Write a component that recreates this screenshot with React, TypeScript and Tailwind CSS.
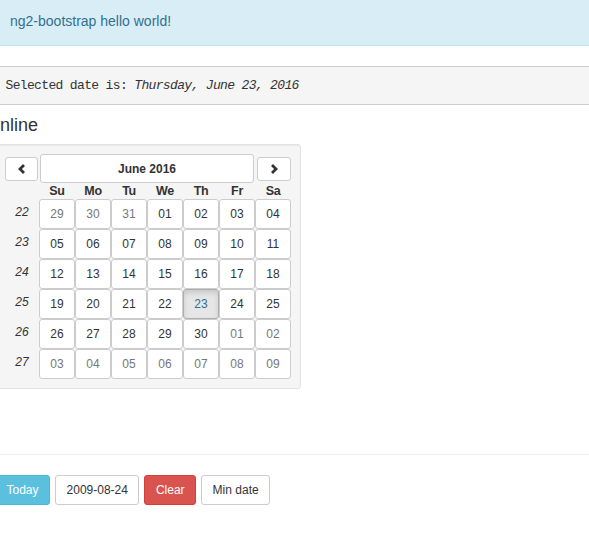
import React from 'react';

type Day = { label: string; muted?: boolean; active?: boolean };

const weeks: { num: number; days: Day[] }[] = [
  { num: 22, days: [{ label: '29', muted: true }, { label: '30', muted: true }, { label: '31', muted: true }, { label: '01' }, { label: '02' }, { label: '03' }, { label: '04' }] },
  { num: 23, days: ['05', '06', '07', '08', '09', '10', '11'].map((label) => ({ label })) },
  { num: 24, days: ['12', '13', '14', '15', '16', '17', '18'].map((label) => ({ label })) },
  { num: 25, days: [{ label: '19' }, { label: '20' }, { label: '21' }, { label: '22' }, { label: '23', active: true }, { label: '24' }, { label: '25' }] },
  { num: 26, days: [{ label: '26' }, { label: '27' }, { label: '28' }, { label: '29' }, { label: '30' }, { label: '01', muted: true }, { label: '02', muted: true }] },
  { num: 27, days: ['03', '04', '05', '06', '07', '08', '09'].map((label) => ({ label, muted: true })) },
];

const dayNames = ['Su', 'Mo', 'Tu', 'We', 'Th', 'Fr', 'Sa'];

const Chevron: React.FC<{ dir: 'left' | 'right' }> = ({ dir }) => (
  <svg width="12" height="12" viewBox="0 0 12 12" className="block">
    <polyline
      points={dir === 'left' ? '8,2 4,6 8,10' : '4,2 8,6 4,10'}
      fill="none"
      stroke="#333"
      strokeWidth="2.8"
      strokeLinejoin="miter"
    />
  </svg>
);

const DayPicker: React.FC = () => (
  <table className="border-collapse">
    <thead>
      <tr>
        <th className="p-0 w-[34px] align-middle">
          <button className="flex items-center justify-center w-[33px] h-[24px] bg-white border border-[#ccc] rounded-[3px]">
            <Chevron dir="left" />
          </button>
        </th>
        <th colSpan={6} className="p-0 px-[1px] align-middle">
          <button className="w-full h-[29px] bg-white border border-[#ccc] rounded-[3px] text-[12px] leading-[18px] font-bold text-[#333]">
            June 2016
          </button>
        </th>
        <th className="p-0 align-middle">
          <button className="ml-auto mr-0 flex items-center justify-center w-[34px] h-[24px] bg-white border border-[#ccc] rounded-[3px]">
            <Chevron dir="right" />
          </button>
        </th>
      </tr>
      <tr>
        <th className="p-0"></th>
        {dayNames.map((d) => (
          <th key={d} className="p-0 text-center text-[12.5px] leading-[16px] font-bold text-[#333] tracking-[-0.3px]">
            {d}
          </th>
        ))}
      </tr>
    </thead>
    <tbody>
      {weeks.map((w) => (
        <tr key={w.num}>
          <td className="p-0 w-[34px] text-center align-middle">
            <em className="block text-[12px] leading-[13px] text-[#333] -mt-[3px]">{w.num}</em>
          </td>
          {w.days.map((d, i) => (
            <td key={i} className="p-0">
              <button
                className={
                  d.active
                    ? 'block w-[36px] h-[30px] border border-[#adadad] rounded-[3px] bg-[#e6e6e6] shadow-[inset_0_3px_5px_rgba(0,0,0,0.125)] text-[12px] leading-[18px] text-[#31708f]'
                    : 'block w-[36px] h-[30px] border border-[#ccc] rounded-[3px] bg-white text-[12px] leading-[18px] ' +
                      (d.muted ? 'text-[#777]' : 'text-[#333]')
                }
              >
                {d.label}
              </button>
            </td>
          ))}
        </tr>
      ))}
    </tbody>
  </table>
);

const App: React.FC = () => {
  return (
    <div className="min-h-[550px] overflow-hidden bg-white font-['Liberation_Sans',Arial,sans-serif] text-[14px] leading-[20px] text-[#333]">
      <div className="-ml-[5px]">
        <div className="bg-[#d9edf7] border-b border-[#bce8f1] text-[#31708f] pt-[11px] pb-[14px] px-[15px] mb-[20px]">
          ng2-bootstrap hello world!
        </div>

        <pre className="bg-[#f5f5f5] border border-r-0 border-[#ccc] py-[9.5px] px-[9.5px] mb-[10px] font-['Liberation_Mono',monospace] text-[13px] leading-[18px] tracking-[-0.65px] text-[#333]">
          Selected date is: <em>Thursday, June 23, 2016</em>
        </pre>

        <h4 className="text-[18px] leading-[20px] font-medium mt-[8.5px] mb-[9px]">Inline</h4>

        <div className="min-h-[290px]">
          <div className="inline-block bg-[#f5f5f5] border border-[#e3e3e3] rounded-[3px] p-[9px] shadow-[inset_0_1px_1px_rgba(0,0,0,0.05)]">
            <DayPicker />
          </div>
        </div>

        <hr className="mt-[20px] mb-[20px] border-0 border-t border-[#eee]" />

        <div className="flex gap-[5px]">
          <button className="px-[10.5px] py-[5px] text-[12px] leading-[18px] rounded-[3px] border border-[#46b8da] bg-[#5bc0de] text-white">
            Today
          </button>
          <button className="px-[10.5px] py-[5px] text-[12px] leading-[18px] rounded-[3px] border border-[#ccc] bg-white text-[#333]">
            2009-08-24
          </button>
          <button className="px-[10.5px] py-[5px] text-[12px] leading-[18px] rounded-[3px] border border-[#d43f3a] bg-[#d9534f] text-white">
            Clear
          </button>
          <button className="px-[10.5px] py-[5px] text-[12px] leading-[18px] rounded-[3px] border border-[#ccc] bg-white text-[#333]">
            Min date
          </button>
        </div>
      </div>
    </div>
  );
};

export default App;
